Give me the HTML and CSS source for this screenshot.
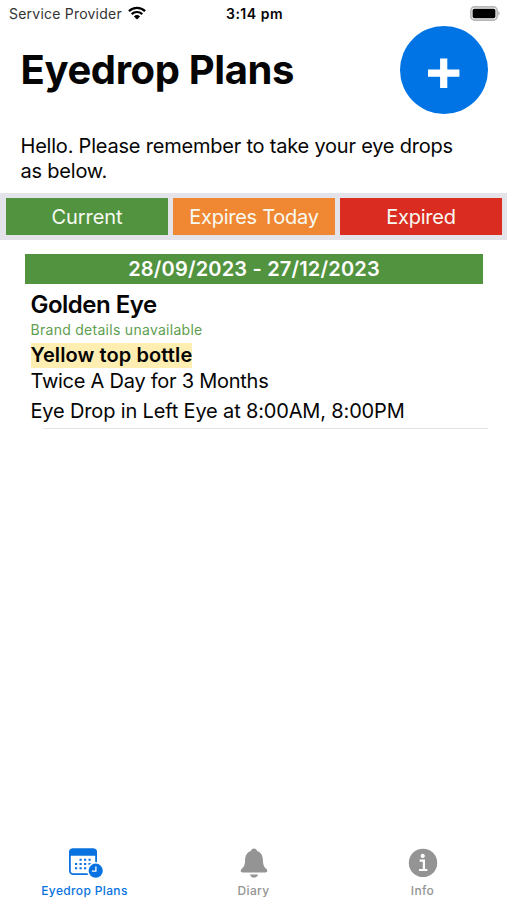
FILE: index.html
```html
<!DOCTYPE html>
<html lang="en">
<head>
<meta charset="utf-8">
<meta name="viewport" content="width=device-width, initial-scale=1">
<title>Eyedrop Plans</title>
<link rel="stylesheet" href="styles.css">
</head>
<body>
<div class="app">
  <div class="status">
    <div class="carrier"><span>Service Provider</span>
      <svg class="wifi" viewBox="0 0 18 14"><g fill="none" stroke="#000" stroke-width="2.2"><path d="M.9 5.1a11.8 11.8 0 0 1 16.2 0"/><path d="M3.7 8.1a7.8 7.8 0 0 1 10.6 0"/></g><path d="M5.9 10.5a4.5 4.5 0 0 1 6.2 0L9 13.6z"/></svg>
    </div>
    <span class="time">3:14 pm</span>
    <svg class="battery" viewBox="0 0 30 15"><rect x=".9" y=".9" width="26.2" height="13.2" rx="3.6" fill="#fff" stroke="#b5b5b5" stroke-width="1.6"/><rect x="2.6" y="2.8" width="22.8" height="9.4" rx="1.6"/><path d="M28.2 5.3c2 .7 2 3.7 0 4.4z" fill="#b5b5b5"/></svg>
  </div>
  <header class="header">
    <h1 class="title">Eyedrop Plans</h1>
    <button class="add" aria-label="Add plan"><svg viewBox="0 0 88 88"><path d="M28 47.2h31.4M43.7 32.600v29.5" stroke="#fff" stroke-width="7.2"/></svg></button>
  </header>
  <p class="greeting">Hello. Please remember to take your eye drops<br>as below.</p>
  <div class="filters">
    <button class="filter current"><span>Current</span></button>
    <button class="filter today"><span>Expires Today</span></button>
    <button class="filter expired"><span>Expired</span></button>
  </div>
  <main class="plans">
    <article class="plan">
      <div class="dates"><span>28/09/2023 - 27/12/2023</span></div>
      <div class="details">
        <h2 class="name"><span>Golden Eye</span></h2>
        <p class="brand"><span>Brand details unavailable</span></p>
        <p class="bottle"><span>Yellow top bottle</span></p>
        <p class="dose"><span>Twice A Day for 3 Months</span></p>
        <p class="schedule"><span>Eye Drop in Left Eye at 8:00AM, 8:00PM</span></p>
      </div>
    </article>
  </main>
  <nav class="tabs">
    <a class="tab active">
      <svg class="icon" viewBox="0 0 36 32"><rect x="1.9" y="2.4" width="26.2" height="24.8" rx="3.4" fill="#fff" stroke="#0873e0" stroke-width="1.8"/><path d="M1 8.7V5q0-3.5 3.5-3.5h21Q29 1.500 29 5v3.700z" fill="#0873e0"/><g fill="#0873e0"><path d="M11.500 11.800h2.200v2h-2.200zM16 11.800h2.200v2H16zM20.500 11.800h2.200v2h-2.200zM7 16h2.200v2H7zM11.500 16h2.200v2h-2.200zM16 16h2.200v2H16zM20.500 16h2.200v2h-2.200zM7 20.200h2.200v2H7zM11.500 20.200h2.200v2h-2.200zM16 20.200h2.200v2H16z"/></g><circle cx="27.700" cy="23.700" r="8.600" fill="#fff"/><circle cx="27.700" cy="23.700" r="7.100" fill="#0873e0"/><path d="M27.900 19.500v4.700h-4" fill="none" stroke="#fff" stroke-width="1.300"/></svg>
      <span>Eyedrop Plans</span>
    </a>
    <a class="tab">
      <svg class="icon" viewBox="0 0 36 32"><path d="M18 1.600c1.700 0 2.800 1 3.100 2.400 3.800 1.300 5.600 4.600 5.800 8.800.2 5 .8 6.800 3.200 8.900.9.800 1.200 1.400 1.200 2.100 0 1-.8 1.700-2 1.700H6.700c-1.200 0-2-.7-2-1.700 0-.7.3-1.300 1.200-2.100 2.400-2.100 3-3.900 3.200-8.900.2-4.200 2-7.500 5.800-8.800C15.200 2.600 16.300 1.600 18 1.600zM14 27.400h8c-.4 2-2 3.200-4 3.200s-3.600-1.200-4-3.200z" fill="#949494"/></svg>
      <span>Diary</span>
    </a>
    <a class="tab">
      <svg class="icon" viewBox="0 0 36 32"><circle cx="18" cy="15.900" r="14.200" fill="#949494"/><circle cx="17.700" cy="8.900" r="2.100" fill="#fff"/><path d="M14.700 13.700h4.200v9.200M14 23h8.300" fill="none" stroke="#fff" stroke-width="2.200"/></svg>
      <span>Info</span>
    </a>
  </nav>
</div>
</body>
</html>
```
FILE: styles.css
```css
* { box-sizing: border-box; }
body, h1, h2, p { margin: 0; }
body { background: #fff; color: #050505; font-family: Inter, "Liberation Sans", sans-serif; }
button { border: 0; padding: 0; font: inherit; color: inherit; }
svg { display: block; }
.app { height: 900px; display: flex; flex-direction: column; }
.status { height: 26px; padding: 1px 7px 0 9px; display: grid; grid-template-columns: 1fr auto 1fr; align-items: center; font-size: 14px; line-height: 25px; }
.carrier { display: flex; align-items: center; gap: 6px; letter-spacing: 0.22px; color: #333; }
.wifi { width: 18px; height: 14px; margin-top: -2px; }
.time { font-weight: 600; letter-spacing: 0.5px; }
.battery { width: 30px; height: 15px; margin-top: -1px; justify-self: end; }
.header { height: 88px; padding: 0 19.5px 0 20.5px; display: flex; align-items: center; justify-content: space-between; }
.title { font-size: 40px; line-height: 48px; font-weight: 700; letter-spacing: -0.38px; white-space: nowrap; }
.add { width: 88px; height: 88px; border-radius: 50%; background: #0074e4; }
.greeting { margin: 20px 0 0 20.5px; height: 59px; font-size: 20px; line-height: 24.5px; letter-spacing: -0.21px; white-space: nowrap; }
.filters { height: 47px; padding: 5px 5px 5px 6px; background: #e4e3e9; display: grid; grid-template-columns: repeat(3, 1fr); gap: 5px; }
.filter { color: #f7faf2; font-size: 20px; letter-spacing: -0.25px; }
.current { background: #52933f; letter-spacing: -0.1px; }
.today { background: #f08833; }
.expired { background: #da2c20; }
.plans { flex: 1; }
.plan { margin: 14px 19px 0 25px; }
.dates { height: 30px; margin-right: 5px; background: #52933f; color: #fff; font-size: 20px; line-height: 31px; font-weight: 600; letter-spacing: 0.18px; text-align: center; }
.details { padding-left: 5.5px; white-space: nowrap; }
.name { margin-top: 6px; font-size: 24px; line-height: 29px; font-weight: 600; letter-spacing: -0.5px; }
.brand { margin-top: 2px; color: #5f9e50; font-size: 14px; line-height: 18px; letter-spacing: 0.28px; }
.bottle { margin-top: 4px; font-size: 20px; line-height: 25px; font-weight: 600; letter-spacing: 0.1px; }
.bottle span { display: inline-block; background: #feeeb2; }
.dose, .schedule { font-size: 20px; line-height: 25px; letter-spacing: -0.16px; }
.dose { margin-top: 1px; letter-spacing: -0.25px; }
.schedule { height: 29px; margin-top: 5px; }
.plan::after { content: ""; display: block; height: 1px; margin-left: 18px; background: #e2e2e2; }
.tabs { height: 53px; display: grid; grid-template-columns: repeat(3, 1fr); }
.tab { display: flex; flex-direction: column; align-items: center; color: #949494; font-size: 12px; line-height: 15px; font-weight: 500; letter-spacing: 0.35px; }
.tab .icon { width: 36px; height: 32px; margin-bottom: 4px; }
.active { color: #0873e0; }
.active .icon { margin-left: 3px; }
```
